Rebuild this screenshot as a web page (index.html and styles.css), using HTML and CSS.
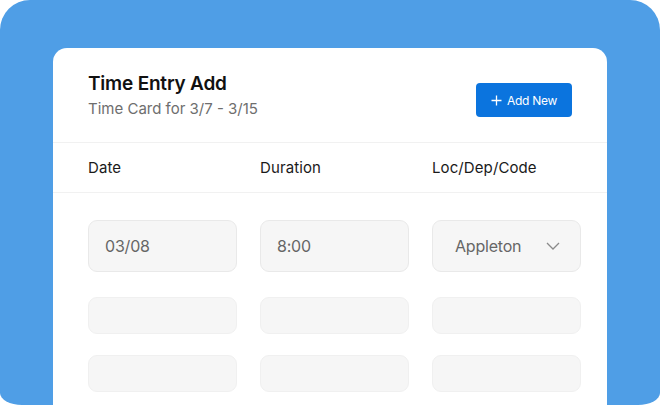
FILE: index.html
```html
<!DOCTYPE html>
<html>
<head>
<meta charset="utf-8">
<link rel="stylesheet" href="styles.css">
</head>
<body>
<div class="panel">
  <div class="card">
    <div class="card-head">
      <div class="titles">
        <div class="title">Time Entry Add</div>
        <div class="subtitle">Time Card for 3/7 - 3/15</div>
      </div>
      <button class="btn">
        <svg width="11" height="11" viewBox="0 0 11 11"><path d="M5.5 0.5v10M0.5 5.5h10" stroke="#fff" stroke-width="1.3" fill="none"/></svg>
        <span>Add New</span>
      </button>
    </div>
    <div class="cols">
      <div>Date</div>
      <div>Duration</div>
      <div>Loc/Dep/Code</div>
    </div>
    <div class="rows">
      <div class="row row-first">
        <div class="field">03/08</div>
        <div class="field">8:00</div>
        <div class="field select">
          <span>Appleton</span>
          <svg width="14" height="8" viewBox="0 0 14 8"><path d="M1 1l6 6 6-6" stroke="#8a8a8a" stroke-width="1.3" fill="none"/></svg>
        </div>
      </div>
      <div class="row row-empty">
        <div class="field"></div>
        <div class="field"></div>
        <div class="field"></div>
      </div>
      <div class="row row-empty">
        <div class="field"></div>
        <div class="field"></div>
        <div class="field"></div>
      </div>
    </div>
  </div>
</div>
</body>
</html>
```
FILE: styles.css
```css
html, body {
  margin: 0;
  padding: 0;
  background: #ffffff;
}
body {
  width: 660px;
  height: 405px;
  overflow: hidden;
  font-family: Inter, "Noto Sans", sans-serif;
}
.panel {
  width: 660px;
  height: 405px;
  background: #4f9ee6;
  border-radius: 30px 30px 22px 22px / 30px 30px 12px 12px;
  padding-top: 48px;
  box-sizing: border-box;
}
.card {
  margin-left: 53px;
  width: 554px;
  height: 357px;
  background: #ffffff;
  border-radius: 14px 14px 0 0;
  overflow: hidden;
}
.card-head {
  display: flex;
  justify-content: space-between;
  align-items: flex-start;
  padding: 24px 35px 22px 35px;
  height: 94px;
  box-sizing: border-box;
}
.title {
  font-size: 19px;
  line-height: 24px;
  font-weight: 600;
  color: #111111;
  letter-spacing: -0.2px;
}
.subtitle {
  margin-top: 2px;
  font-size: 15px;
  line-height: 22px;
  color: #6e6e6e;
  letter-spacing: 0px;
}
.btn {
  margin-top: 11px;
  width: 96px;
  height: 34px;
  border: none;
  border-radius: 4px;
  background: #0b74de;
  color: #ffffff;
  font-family: Inter, "Noto Sans", sans-serif;
  font-size: 12px;
  letter-spacing: -0.3px;
  display: flex;
  align-items: center;
  justify-content: center;
  gap: 5px;
  padding: 0;
}
.cols {
  display: grid;
  grid-template-columns: 149px 149px 149px;
  column-gap: 23px;
  padding: 0 35px;
  height: 51px;
  align-items: center;
  border-top: 1px solid #f1f1f1;
  border-bottom: 1px solid #f1f1f1;
  box-sizing: border-box;
  font-size: 15px;
  color: #1a1a1a;
  letter-spacing: 0.1px;
}
.rows {
  padding: 27px 35px 0 35px;
  display: flex;
  flex-direction: column;
}
.row {
  display: grid;
  grid-template-columns: 149px 149px 149px;
  column-gap: 23px;
}
.field {
  background: #f6f6f6;
  border: 1px solid #e9e9e9;
  border-radius: 9px;
  box-sizing: border-box;
}
.row-first .field {
  height: 52px;
  display: flex;
  align-items: center;
  padding-left: 16px;
  padding-right: 20px;
  font-size: 16px;
  color: #666666;
  letter-spacing: -0.2px;
}
.select {
  justify-content: space-between;
  padding-left: 22px !important;
}
.row-empty {
  margin-top: 25px;
}
.row-empty + .row-empty {
  margin-top: 21px;
}
.row-empty .field {
  height: 37px;
  border-color: #f0f0f0;
}
```
